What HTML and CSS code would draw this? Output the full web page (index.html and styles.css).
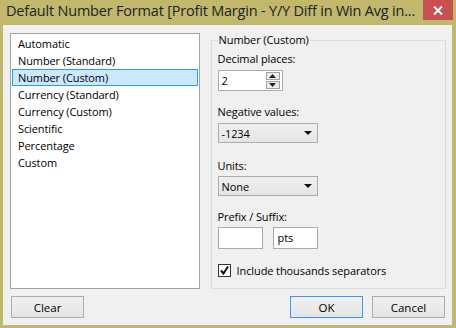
FILE: index.html
```html
<!DOCTYPE html>
<html lang="en">
<head>
<meta charset="UTF-8">
<title>Default Number Format</title>
<link rel="stylesheet" href="styles.css">
</head>
<body>
<div class="window">
  <div class="titlebar">
    <span class="title">Default Number Format [Profit Margin - Y/Y Diff in Win Avg in...</span>
    <div class="close-btn">
      <svg width="10" height="9" viewBox="0 0 10 9"><path d="M1 0.5 L9 8.5 M9 0.5 L1 8.5" stroke="#fff" stroke-width="2"/></svg>
    </div>
  </div>
  <div class="client">
    <div class="main">
      <ul class="format-list">
        <li>Automatic</li>
        <li>Number (Standard)</li>
        <li class="selected">Number (Custom)</li>
        <li>Currency (Standard)</li>
        <li>Currency (Custom)</li>
        <li>Scientific</li>
        <li>Percentage</li>
        <li>Custom</li>
      </ul>
      <fieldset class="options">
        <legend>Number (Custom)</legend>
        <div class="label">Decimal places:</div>
        <div class="spinner">
          <span class="spin-value">2</span>
          <div class="spin-buttons">
            <div class="spin-btn"><svg width="7" height="4" viewBox="0 0 7 4"><path d="M3.5 0 L7 4 L0 4 Z" fill="#222"/></svg></div>
            <div class="spin-btn"><svg width="7" height="4" viewBox="0 0 7 4"><path d="M0 0 L7 0 L3.5 4 Z" fill="#222"/></svg></div>
          </div>
        </div>
        <div class="label negative">Negative values:</div>
        <div class="dropdown">
          <span>-1234</span>
          <svg width="8" height="4" viewBox="0 0 8 4"><path d="M0 0 L8 0 L4 4 Z" fill="#111"/></svg>
        </div>
        <div class="label units">Units:</div>
        <div class="dropdown units-select">
          <span>None</span>
          <svg width="8" height="4" viewBox="0 0 8 4"><path d="M0 0 L8 0 L4 4 Z" fill="#111"/></svg>
        </div>
        <div class="label affix">Prefix / Suffix:</div>
        <div class="affix-row">
          <div class="textbox"></div>
          <div class="textbox">pts</div>
        </div>
        <div class="check-row">
          <div class="checkbox">
            <svg width="11" height="11" viewBox="0 0 11 11"><path d="M2 5.5 L4.5 8.5 L9 1.5" stroke="#111" stroke-width="2" fill="none"/></svg>
          </div>
          <span>Include thousands separators</span>
        </div>
      </fieldset>
    </div>
    <div class="buttons">
      <button class="btn">Clear</button>
      <div class="right-buttons">
        <button class="btn default">OK</button>
        <button class="btn">Cancel</button>
      </div>
    </div>
  </div>
</div>
</body>
</html>
```

FILE: styles.css
```css
html, body {
  margin: 0;
  padding: 0;
}
body {
  font-family: "Open Sans", "Noto Sans", sans-serif;
  font-size: 11px;
  letter-spacing: -0.1px;
  color: #000;
}
.window {
  width: 456px;
  height: 328px;
  background: #c1b86e;
  display: flex;
  flex-direction: column;
  box-sizing: border-box;
  padding: 0 4px 3px 3px;
}
.titlebar {
  height: 25px;
  display: flex;
  align-items: flex-start;
  justify-content: space-between;
}
.title {
  font-size: 14.5px;
  color: #222;
  line-height: 20px;
  margin: 1px 0 0 3px;
  white-space: nowrap;
  letter-spacing: -0.2px;
}
.close-btn {
  width: 30px;
  height: 20px;
  background: #c75050;
  display: flex;
  align-items: center;
  justify-content: center;
  margin-right: -1px;
}
.client {
  flex: 1;
  background: #f0f0f0;
  padding: 8px 6px 7px 8px;
  display: flex;
  flex-direction: column;
  box-sizing: border-box;
}
.main {
  display: flex;
  align-items: flex-start;
  gap: 11px;
  height: 256px;
}
.format-list {
  list-style: none;
  margin: 0 0 0 -1px;
  padding: 1px;
  width: 190px;
  height: 256px;
  box-sizing: border-box;
  background: #fff;
  border: 1px solid #a3a3a3;
}
.format-list li {
  height: 17px;
  line-height: 16px;
  padding-left: 5px;
  box-sizing: border-box;
  border: 1px solid transparent;
}
.format-list li.selected {
  background: #cce8ff;
  border-color: #26a0da;
}
.options {
  margin: -1px 0 0 0;
  padding: 3px 6px 0 6px;
  width: 236px;
  height: 257px;
  box-sizing: border-box;
  border: 1px solid #dcdcdc;
  min-width: 0;
}
.options legend {
  padding: 0 1px;
  margin-left: 0;
  line-height: 16px;
}
.label {
  line-height: 16px;
  height: 16px;
}
.label.negative {
  margin-top: 13px;
}
.label.units {
  margin-top: 15px;
}
.label.affix {
  margin-top: 13px;
}
.spinner {
  margin-top: 3px;
  width: 65px;
  height: 21px;
  box-sizing: border-box;
  background: #fff;
  border: 1px solid #acacac;
  display: flex;
  align-items: center;
  justify-content: space-between;
  padding: 1px 1px 1px 3px;
}
.spin-value {
  line-height: 17px;
}
.spin-buttons {
  display: flex;
  flex-direction: column;
  gap: 1px;
  margin-right: 1px;
}
.spin-btn {
  width: 14px;
  height: 8px;
  box-sizing: border-box;
  border: 1px solid #a0a0a0;
  background: #ececec;
  display: flex;
  align-items: center;
  justify-content: center;
}
.dropdown {
  margin-top: 3px;
  width: 100px;
  height: 20px;
  box-sizing: border-box;
  border: 1px solid #acacac;
  background: linear-gradient(#f0f0f0, #e5e5e5);
  display: flex;
  align-items: center;
  justify-content: space-between;
  padding: 0 5px 0 3px;
}
.dropdown.units-select {
  margin-top: 2px;
}
.affix-row {
  display: flex;
  gap: 10px;
  margin-top: 2px;
}
.textbox {
  width: 45px;
  height: 22px;
  box-sizing: border-box;
  background: #fff;
  border: 1px solid #acacac;
  padding-left: 4px;
  line-height: 20px;
}
.check-row {
  display: flex;
  align-items: center;
  gap: 6px;
  margin-top: 14px;
}
.checkbox {
  width: 13px;
  height: 13px;
  box-sizing: border-box;
  border: 1px solid #333;
  background: #fff;
  display: flex;
  align-items: center;
  justify-content: center;
}
.buttons {
  display: flex;
  justify-content: space-between;
  margin-top: 7px;
}
.right-buttons {
  display: flex;
  gap: 9px;
  margin-right: 1px;
}
.btn {
  width: 73px;
  height: 22px;
  font-family: inherit;
  font-size: 11.5px;
  color: #000;
  background: linear-gradient(#f0f0f0, #e5e5e5);
  border: 1px solid #acacac;
  padding: 0;
}
.btn.default {
  border-color: #3399ff;
}
```
